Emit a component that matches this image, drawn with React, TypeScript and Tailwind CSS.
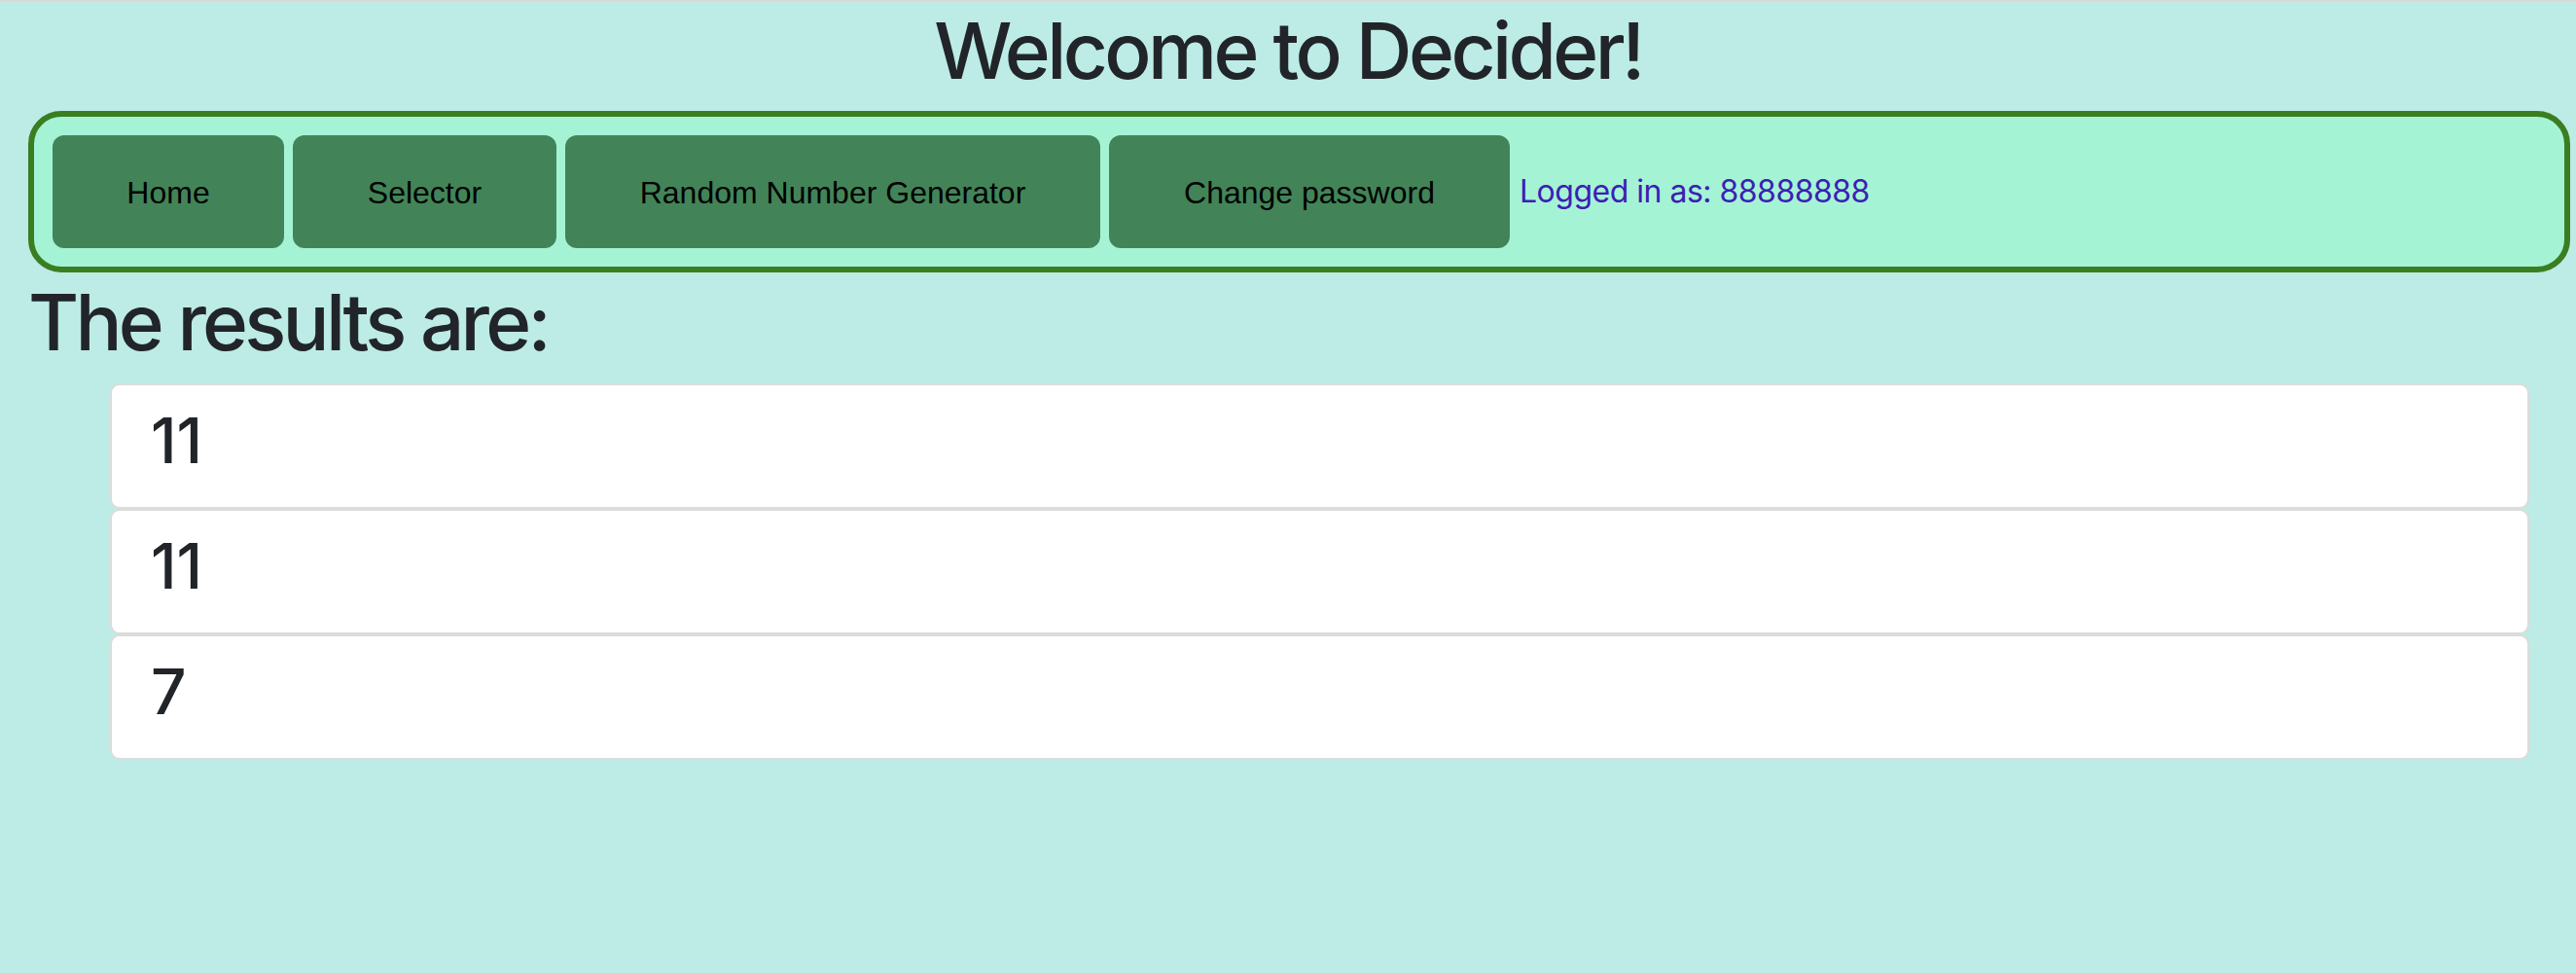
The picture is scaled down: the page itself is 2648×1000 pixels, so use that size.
import React from 'react';

const navButtons = [
  { label: 'Home', width: 'w-[238px]' },
  { label: 'Selector', width: 'w-[271px]' },
  { label: 'Random Number Generator', width: 'w-[550px]' },
  { label: 'Change password', width: 'w-[412px]' },
];

const results = [11, 11, 7];

export default function App() {
  return (
    <div
      className="min-h-[1000px] w-full border-t-[2px] border-[#d8d8d8] bg-[#bdebe6] text-[#212529]"
      style={{ fontFamily: "Inter, 'Noto Sans', sans-serif" }}
    >
      {/* Title */}
      <h1 className="mt-[2px] mb-[14px] text-center text-[80px] font-medium leading-[96px] tracking-[-3.6px]">
        Welcome to Decider!
      </h1>

      {/* Nav bar */}
      <div className="ml-[29px] mr-[6px] flex items-center rounded-[34px] border-[6px] border-[#3a7e22] bg-[#a5f3d5] p-[19px] pr-[20px]">
        <div className="flex gap-[9px]">
          {navButtons.map((b) => (
            <button
              key={b.label}
              className={`${b.width} h-[116px] rounded-[12px] bg-[#428458] pt-[2px] text-[32px] text-black`}
              style={{ fontFamily: "'Liberation Sans', Arial, sans-serif" }}
            >
              {b.label}
            </button>
          ))}
        </div>
        <span className="ml-[10px] text-[32px] tracking-[-0.5px] text-[#3b20b5]">Logged in as: 88888888</span>
      </div>

      {/* Results */}
      <h1 className="ml-[29px] mt-[3px] mb-[15px] text-[80px] font-medium leading-[96px] tracking-[-3.8px]">
        The results are:
      </h1>
      <ul className="ml-[113px] mr-[48px]">
        {results.map((r, i) => (
          <li
            key={i}
            className="rounded-[10px] border-[2px] border-[#dcdcdc] bg-white pl-[40px] pr-[32px] pt-[18px] pb-[30px]"
          >
            <h2 className="text-[64px] font-medium leading-[77px]">{r}</h2>
          </li>
        ))}
      </ul>
    </div>
  );
}
